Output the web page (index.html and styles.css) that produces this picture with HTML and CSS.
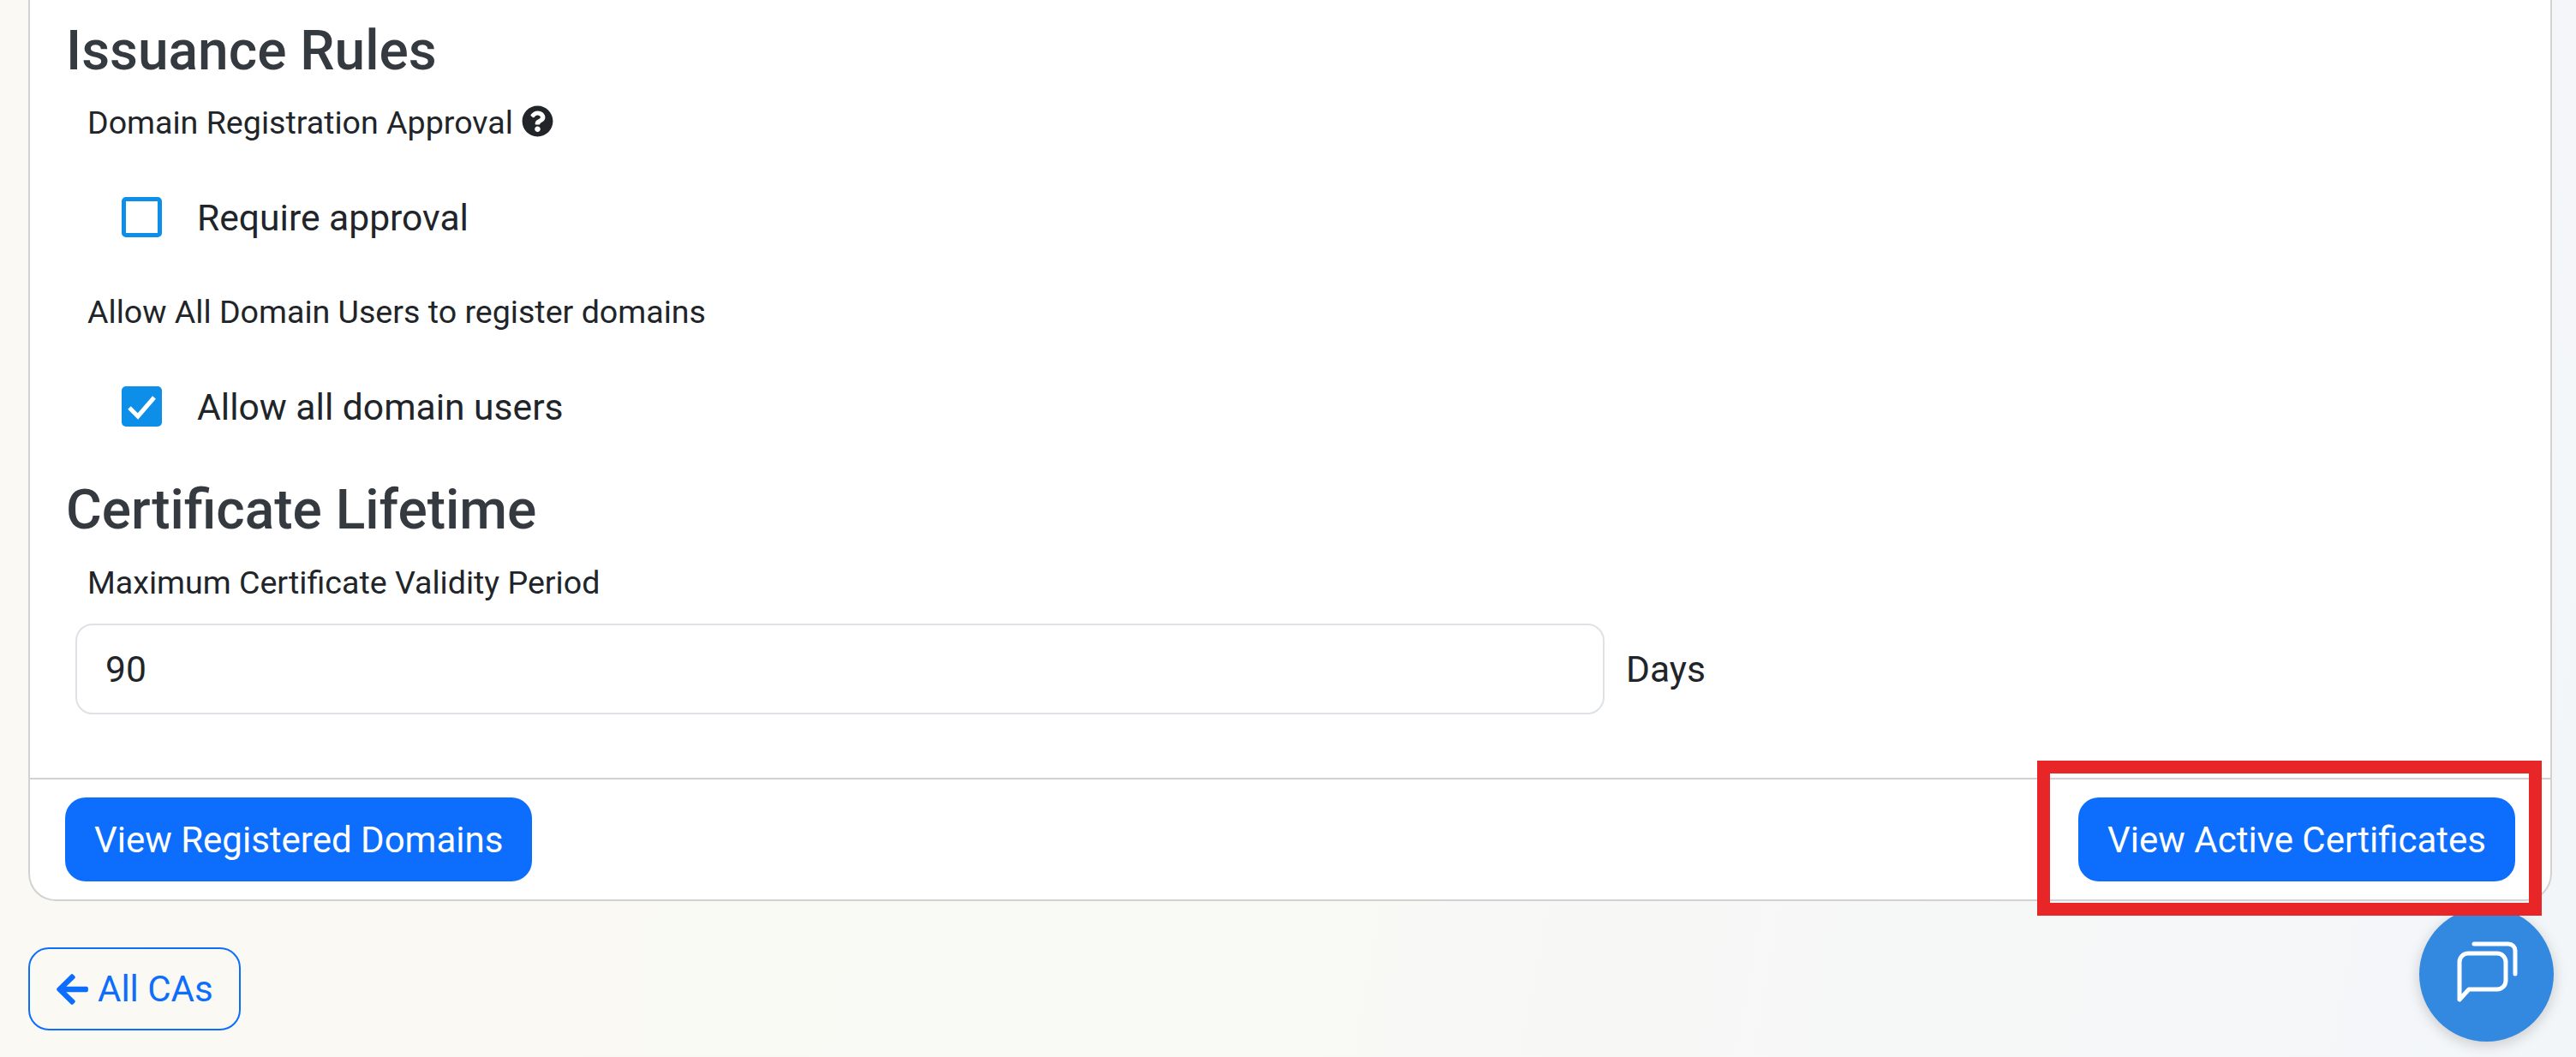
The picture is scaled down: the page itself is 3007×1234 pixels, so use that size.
FILE: index.html
```html
<!DOCTYPE html>
<html lang="en">
<head>
    <meta charset="UTF-8">
    <meta name="viewport" content="width=device-width, initial-scale=1.0">
    <title>CA Settings</title>
    <link rel="stylesheet" href="styles.css">
</head>
<body>
    <div class="card">
        <div class="card-body">
            <h3 class="section-title">Issuance Rules</h3>
            <div class="field-label">
                Domain Registration Approval
                <svg class="help-icon" viewBox="0 0 512 512"><path d="M504 256c0 136.997-111.043 248-248 248S8 392.997 8 256C8 119.083 119.043 8 256 8s248 111.083 248 248zM262.655 90c-54.497 0-89.255 22.957-116.549 63.758-3.536 5.286-2.353 12.415 2.715 16.258l34.699 26.31c5.205 3.947 12.621 3.008 16.665-2.122 17.864-22.658 30.113-35.797 57.303-35.797 20.429 0 45.698 13.148 45.698 32.958 0 14.976-12.363 22.667-32.534 33.976C247.128 238.528 216 254.941 216 296v4c0 6.627 5.373 12 12 12h56c6.627 0 12-5.373 12-12v-1.333c0-28.462 83.186-29.647 83.186-106.667 0-58.002-60.165-102-116.531-102zM256 338c-25.365 0-46 20.635-46 46 0 25.364 20.635 46 46 46s46-20.636 46-46c0-25.365-20.635-46-46-46z"/></svg>
            </div>
            <div class="check-row">
                <span class="check-box"></span>
                <span class="check-text">Require approval</span>
            </div>
            <div class="field-label">Allow All Domain Users to register domains</div>
            <div class="check-row">
                <span class="check-box checked">
                    <svg viewBox="0 0 47 47"><path d="M9 25 L19 35 L38 13" fill="none" stroke="#fff" stroke-width="5"/></svg>
                </span>
                <span class="check-text">Allow all domain users</span>
            </div>
            <h3 class="section-title second">Certificate Lifetime</h3>
            <div class="field-label">Maximum Certificate Validity Period</div>
            <div class="input-row">
                <input class="text-input" type="text" value="90">
                <span class="input-unit">Days</span>
            </div>
        </div>
        <div class="card-footer">
            <button class="btn">View Registered Domains</button>
            <button class="btn">View Active Certificates</button>
        </div>
    </div>

    <a class="back-btn" href="#">
        <svg class="back-arrow" viewBox="0 0 448 512"><path d="M257.5 445.1l-22.2 22.2c-9.4 9.4-24.6 9.4-33.9 0L7 273c-9.4-9.4-9.4-24.6 0-33.9L201.4 44.7c9.4-9.4 24.6-9.4 33.9 0l22.2 22.2c9.5 9.5 9.3 25-.4 34.3L136.6 216H424c13.3 0 24 10.7 24 24v32c0 13.3-10.7 24-24 24H136.6l120.5 114.8c9.8 9.3 10 24.8.4 34.3z"/></svg>
        All CAs
    </a>

    <div class="chat-fab">
        <svg viewBox="0 0 157 157"><path d="M47 108 V64 a10 10 0 0 1 10-10 H91 a10 10 0 0 1 10 10 V86 a10 10 0 0 1-10 10 H58 Z M64 43 H104 a8 8 0 0 1 8 8 V78" fill="none" stroke="#fff" stroke-width="5" stroke-linecap="round" stroke-linejoin="round"/></svg>
    </div>

    <div class="highlight-box"></div>
</body>
</html>
```

FILE: styles.css
```css
html, body {
    height: 100%;
    margin: 0;
}

body {
    position: relative;
    width: 3007px;
    height: 1234px;
    overflow: hidden;
    box-sizing: border-box;
    padding: 0 28px 0 33px;
    font-family: Roboto, "Liberation Sans", sans-serif;
    color: #212529;
    background: linear-gradient(100deg, #faf9f3 0%, #f9f9f5 50%, #f3f6f9 100%);
}

.card {
    background-color: white;
    border: 2px solid #d2d2d2;
    border-top: none;
    border-radius: 0 0 32px 32px;
}

.card-body {
    padding: 22px 42px 74px;
}

.section-title {
    margin: 0;
    font-size: 64px;
    font-weight: 500;
    line-height: 76px;
    color: #343a40;
}

.section-title.second {
    margin-top: -1px;
}

.field-label {
    display: flex;
    align-items: center;
    gap: 10px;
    margin: 19px 0 0 25px;
    font-size: 37.6px;
    line-height: 52px;
}

.check-row + .field-label {
    margin-top: 21px;
}

.section-title.second + .field-label {
    margin-top: 20px;
}

.help-icon {
    width: 37px;
    height: 37px;
    fill: #212529;
    margin-top: -4px;
}

.check-row {
    display: flex;
    align-items: center;
    height: 47px;
    margin: 61px 0 61px 65px;
}

.check-box {
    box-sizing: border-box;
    width: 47px;
    height: 47px;
    border: 5px solid #0d8ee9;
    border-radius: 5px;
    background-color: white;
}

.check-box.checked {
    background-color: #0d8ee9;
    border: none;
}

.check-box svg {
    display: block;
}

.check-text {
    margin-left: 41px;
    font-size: 42.6px;
}

.input-row {
    display: flex;
    align-items: center;
    margin: 22px 0 0 11px;
}

.text-input {
    box-sizing: border-box;
    width: 1785px;
    height: 106px;
    padding: 0 33px;
    border: 2px solid #dee2e6;
    border-radius: 20px;
    font-family: inherit;
    font-size: 42.6px;
    color: #212529;
}

.input-unit {
    margin-left: 25px;
    font-size: 42.6px;
}

.card-footer {
    display: flex;
    justify-content: space-between;
    padding: 21px 41px;
    border-top: 2px solid #d2d2d2;
}

.btn {
    height: 98px;
    padding: 0 34px;
    border: none;
    border-radius: 24px;
    background-color: #0d6efd;
    color: white;
    font-family: inherit;
    font-size: 42px;
}

.back-btn {
    display: flex;
    align-items: center;
    gap: 11px;
    box-sizing: border-box;
    width: 248px;
    height: 97px;
    margin-top: 54px;
    padding-left: 31px;
    border: 2px solid #0d6efd;
    border-radius: 24px;
    color: #0d6efd;
    font-size: 42px;
    text-decoration: none;
}

.back-arrow {
    width: 37px;
    height: 42px;
    fill: #0d6efd;
}

/* floating things on top of the page */
.chat-fab {
    position: absolute;
    left: 2824px;
    top: 1059px;
    width: 157px;
    height: 157px;
    border-radius: 50%;
    background-color: #3388e0;
    box-shadow: 0 4px 16px rgba(0, 0, 0, 0.18);
}

.chat-fab svg {
    display: block;
}

.highlight-box {
    position: absolute;
    left: 2378px;
    top: 888px;
    width: 589px;
    height: 181px;
    box-sizing: border-box;
    border: 15px solid #e92627;
}
```
